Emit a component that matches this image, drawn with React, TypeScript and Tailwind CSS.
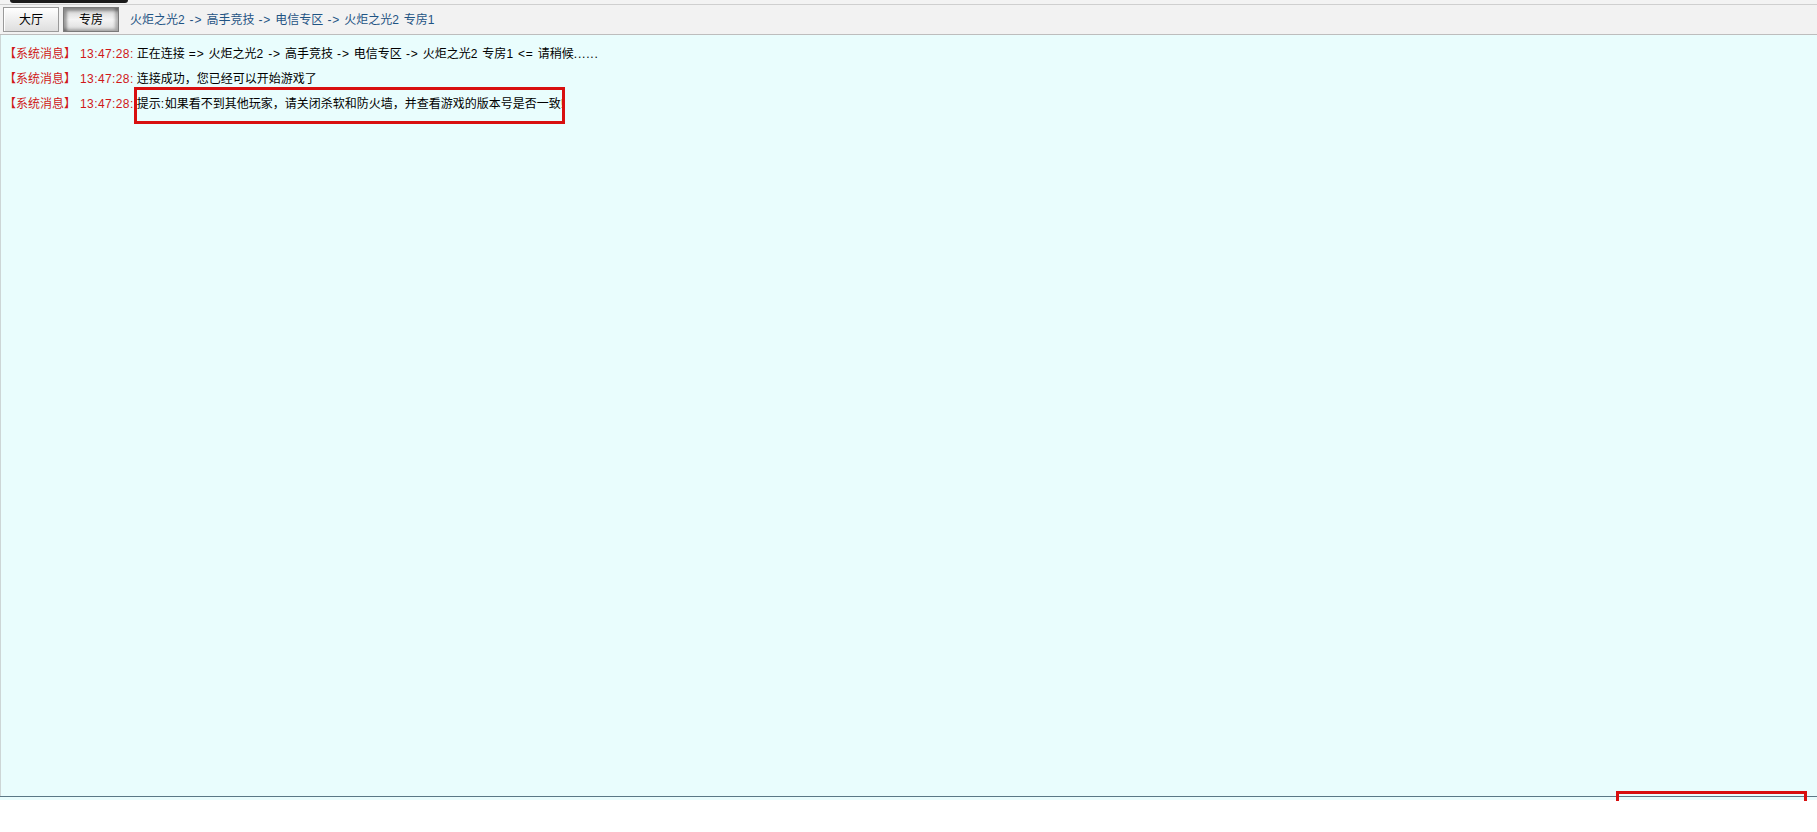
import React from 'react';

const FONT = '"Liberation Sans", "Noto Sans CJK SC", sans-serif';

type Line = { time: string; text: string; boxed?: boolean };

const LINES: Line[] = [
  { time: '13:47:28:', text: '正在连接 => 火炬之光2 -> 高手竞技 -> 电信专区 -> 火炬之光2 专房1 <= 请稍候......' },
  { time: '13:47:28:', text: '连接成功，您已经可以开始游戏了' },
  { time: '13:47:28:', text: '提示:如果看不到其他玩家，请关闭杀软和防火墙，并查看游戏的版本号是否一致!', boxed: true },
];

// latin runs are a bit wider in the original (tahoma), so space them out
function Mixed({ text }: { text: string }) {
  const parts = text.split(/([\x20-\x7e]+)/).filter(Boolean);
  return (
    <>
      {parts.map((p, i) =>
        /^[\x20-\x7e]+$/.test(p) ? (
          <span key={i} className="tracking-[0.8px] whitespace-pre">
            {p}
          </span>
        ) : (
          <span key={i}>{p}</span>
        ),
      )}
    </>
  );
}

function TabButton({ label, active }: { label: string; active?: boolean }) {
  return (
    <button
      type="button"
      className={
        active
          ? 'h-[25px] w-[56px] border border-[#7a7a7a] bg-gradient-to-b from-[#d0d0d0] via-[#f4f4f4] to-[#dcdcdc] text-[12px] text-black shadow-[inset_3px_3px_3px_rgba(0,0,0,0.35),inset_-3px_-2px_3px_rgba(0,0,0,0.25)]'
          : 'h-[25px] w-[56px] border border-[#9a9a9a] bg-gradient-to-b from-[#ffffff] to-[#dedede] text-[12px] text-black shadow-[inset_1px_1px_0_#ffffff]'
      }
    >
      {label}
    </button>
  );
}

export default function App() {
  return (
    <div className="relative flex h-[832px] w-full flex-col bg-white" style={{ fontFamily: FONT }}>
      {/* top strip */}
      <div className="h-[4px] bg-[#f3f3f3]" />
      <div className="absolute left-[10px] top-0 h-[3px] w-[118px] rounded-b-[4px] bg-[#1b1b1b]" />

      {/* tab bar */}
      <div className="flex h-[31px] items-center gap-[4px] border-y border-t-[#cfcfcf] border-b-[#bdbdbd] bg-[#f2f2f2] pl-[3px]">
        <TabButton label="大厅" />
        <TabButton label="专房" active />
        <span className="ml-[7px] text-[12px] text-[#1f5484]">
          <Mixed text="火炬之光2 -> 高手竞技 -> 电信专区 -> 火炬之光2 专房1" />
        </span>
      </div>

      {/* message area */}
      <div className="flex h-[761px] flex-col border-l border-[#cdd6d6] bg-[#e9fdfd] pl-[3px] pt-[7px]">
        {LINES.map((l, i) => (
          <div key={i} className="flex h-[25px] items-center text-[12px] leading-[25px]">
            <span className="text-[#d01818]">【系统消息】</span>
            <span className="ml-[4px] tracking-[0.4px] text-[#d01818]">{l.time}</span>
            <span className="relative ml-[3px] text-black">
              <Mixed text={l.text} />
              {l.boxed && (
                <span className="pointer-events-none absolute left-[-3px] top-[-5px] h-[37px] w-[431px] border-[3px] border-[#d80f0f]" />
              )}
            </span>
          </div>
        ))}
      </div>

      {/* bottom divider */}
      <div className="relative h-[4px] border-t border-[#5b7886] bg-[#e9fdfd]">
        <div className="absolute left-[1616px] top-[-6px] h-[10px] w-[191px] border-x-[3px] border-t-[3px] border-[#d80f0f]" />
      </div>
      <div className="flex-1 bg-white" />
    </div>
  );
}
